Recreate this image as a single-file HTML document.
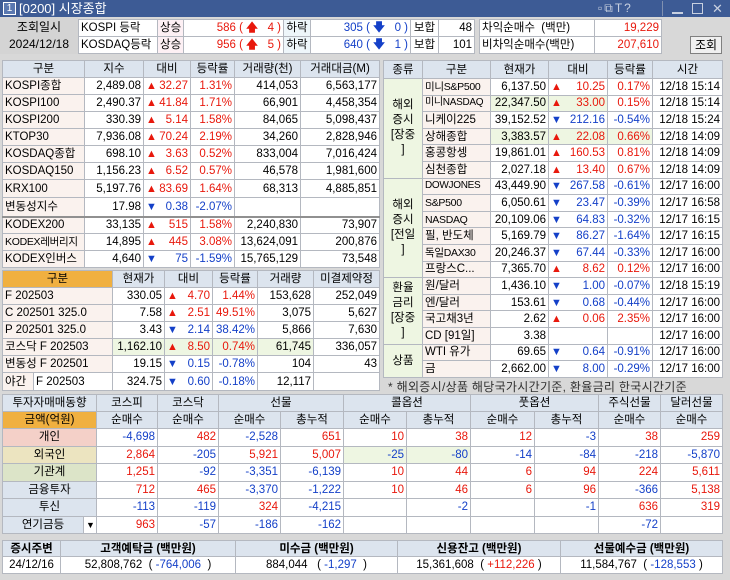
<!DOCTYPE html>
<html><head><meta charset="utf-8"><style>
*{box-sizing:border-box;margin:0;padding:0}
body{width:730px;height:580px;background:#d8d8d8;font-family:"Liberation Sans","Noto Sans CJK KR",sans-serif;font-size:11.5px;color:#000;position:relative;overflow:hidden}
.a{position:absolute}
table{border-collapse:collapse;table-layout:fixed;position:absolute;background:#fff}
td{border:1px solid #b4b8c0;padding:0 2px;white-space:nowrap;overflow:hidden;text-align:right;line-height:14px}
.h td,td.h{background:#dce4ee;text-align:center}
.l{text-align:left}.c{text-align:center}
.r{color:#e8180c}.b{color:#1440c8}
.lp{background:#faf2ee;text-align:left}
.n{font-size:10.5px;letter-spacing:-0.3px}
.g{background:#eef6e2}
.up{color:#e8180c;float:left;font-size:11px}
.dn{color:#1440c8;float:left;font-size:11px}
</style></head><body>
<div class="a" style="left:0;top:0;width:730px;height:17px;background:#3d5b95;color:#fff;font-size:13px;line-height:17px;white-space:nowrap">
<span style="display:inline-block;width:13px;height:13px;border:1px solid #fff;margin:2px 3px 0 3px;font-size:10px;line-height:11px;text-align:center;vertical-align:top;background:#5a78b0">1</span>[0200] 시장종합</div>
<div class="a" style="left:692px;top:3px;width:11px;height:11px;border:1px solid #c8d0e0"></div>
<div class="a" style="left:712px;top:3px;color:#c8d0e0;font-size:13px;line-height:11px">✕</div>
<div class="a" style="left:672px;top:12px;width:11px;height:2px;background:#c8d0e0"></div>
<div class="a" style="left:662px;top:1px;width:1px;height:15px;background:#8090b0"></div>
<div class="a" style="left:598px;top:0;color:#c8d0e0;font-size:12px;line-height:17px;letter-spacing:2px;white-space:nowrap">▫⧉T?</div>
<div class="a" style="left:0;top:17px;width:78px;height:37px;background:#d4d4d4;text-align:center;line-height:17px;font-size:12px;padding-top:2px">조회일시<br>2024/12/18</div>
<table style="left:78px;top:19px;width:396px">
<colgroup><col width="79"><col width="26"><col width="100"><col width="27"><col width="100"><col width="28"><col width="36"></colgroup>
<tr style="height:17px"><td class="l">KOSPI 등락</td><td class="c" style="background:#fdf0f4">상승</td><td class="r">586 ( <b>🡅</b> &nbsp;&nbsp;4 )</td><td class="c" style="background:#eef6fa">하락</td><td class="b">305 ( <b>🡇</b> &nbsp;&nbsp;0 )</td><td class="c">보합</td><td>48</td></tr>
<tr style="height:17px"><td class="l">KOSDAQ등락</td><td class="c" style="background:#fdf0f4">상승</td><td class="r">956 ( <b>🡅</b> &nbsp;&nbsp;5 )</td><td class="c" style="background:#eef6fa">하락</td><td class="b">640 ( <b>🡇</b> &nbsp;&nbsp;1 )</td><td class="c">보합</td><td>101</td></tr>
</table>
<table style="left:479px;top:19px;width:182px">
<colgroup><col width="115"><col width="67"></colgroup>
<tr style="height:17px"><td class="l">차익순매수 &nbsp;(백만)</td><td class="r">19,229</td></tr>
<tr style="height:17px"><td class="l">비차익순매수(백만)</td><td class="r">207,610</td></tr>
</table>
<div class="a" style="left:690px;top:36px;width:32px;height:18px;background:#f0f0f0;border:1px solid #808080;text-align:center;line-height:16px;font-size:12px">조회</div>

<table style="left:2px;top:60px;width:377px">
<colgroup><col width="82"><col width="59"><col width="47"><col width="44"><col width="66"><col width="79"></colgroup>
<tr class="h" style="height:17px"><td>구분</td><td>지수</td><td>대비</td><td>등락률</td><td>거래량(천)</td><td>거래대금(M)</td></tr>
<tr style="height:17px"><td class="lp">KOSPI종합</td><td>2,489.08</td><td class="r"><span class="up">▲</span>32.27</td><td class="r">1.31%</td><td>414,053</td><td>6,563,177</td></tr>
<tr style="height:17px"><td class="lp">KOSPI100</td><td>2,490.37</td><td class="r"><span class="up">▲</span>41.84</td><td class="r">1.71%</td><td>66,901</td><td>4,458,354</td></tr>
<tr style="height:17px"><td class="lp">KOSPI200</td><td>330.39</td><td class="r"><span class="up">▲</span>5.14</td><td class="r">1.58%</td><td>84,065</td><td>5,098,437</td></tr>
<tr style="height:17px"><td class="lp">KTOP30</td><td>7,936.08</td><td class="r"><span class="up">▲</span>70.24</td><td class="r">2.19%</td><td>34,260</td><td>2,828,946</td></tr>
<tr style="height:17px"><td class="lp">KOSDAQ종합</td><td>698.10</td><td class="r"><span class="up">▲</span>3.63</td><td class="r">0.52%</td><td>833,004</td><td>7,016,424</td></tr>
<tr style="height:17px"><td class="lp">KOSDAQ150</td><td>1,156.23</td><td class="r"><span class="up">▲</span>6.52</td><td class="r">0.57%</td><td>46,578</td><td>1,981,600</td></tr>
<tr style="height:18px"><td class="lp">KRX100</td><td>5,197.76</td><td class="r"><span class="up">▲</span>83.69</td><td class="r">1.64%</td><td>68,313</td><td>4,885,851</td></tr>
<tr style="height:19px;border-bottom:2px solid #909090"><td class="lp">변동성지수</td><td>17.98</td><td class="b"><span class="dn">▼</span>0.38</td><td class="b">-2.07%</td><td></td><td></td></tr>
<tr style="height:17px"><td class="lp">KODEX200</td><td>33,135</td><td class="r"><span class="up">▲</span>515</td><td class="r">1.58%</td><td>2,240,830</td><td>73,907</td></tr>
<tr style="height:17px"><td class="lp n">KODEX레버리지</td><td>14,895</td><td class="r"><span class="up">▲</span>445</td><td class="r">3.08%</td><td>13,624,091</td><td>200,876</td></tr>
<tr style="height:17px"><td class="lp">KODEX인버스</td><td>4,640</td><td class="b"><span class="dn">▼</span>75</td><td class="b">-1.59%</td><td>15,765,129</td><td>73,548</td></tr>
</table>

<table style="left:2px;top:270px;width:377px">
<colgroup><col width="31"><col width="79"><col width="52"><col width="48"><col width="45"><col width="56"><col width="66"></colgroup>
<tr class="h" style="height:17px"><td colspan="2" style="background:#f0b040">구분</td><td>현재가</td><td>대비</td><td>등락률</td><td>거래량</td><td>미결제약정</td></tr>
<tr style="height:17px"><td colspan="2" class="lp">F 202503</td><td>330.05</td><td class="r"><span class="up">▲</span>4.70</td><td class="r">1.44%</td><td>153,628</td><td>252,049</td></tr>
<tr style="height:17px"><td colspan="2" class="lp">C 202501 325.0</td><td>7.58</td><td class="r"><span class="up">▲</span>2.51</td><td class="r">49.51%</td><td>3,075</td><td>5,627</td></tr>
<tr style="height:17px"><td colspan="2" class="lp">P 202501 325.0</td><td>3.43</td><td class="b"><span class="dn">▼</span>2.14</td><td class="b">38.42%</td><td>5,866</td><td>7,630</td></tr>
<tr style="height:17px"><td colspan="2" class="lp">코스닥 F 202503</td><td class="g">1,162.10</td><td class="r g"><span class="up">▲</span>8.50</td><td class="r g">0.74%</td><td class="g">61,745</td><td>336,057</td></tr>
<tr style="height:17px"><td colspan="2" class="lp">변동성 F 202501</td><td>19.15</td><td class="b"><span class="dn">▼</span>0.15</td><td class="b">-0.78%</td><td>104</td><td>43</td></tr>
<tr style="height:18px"><td class="lp">야간</td><td class="l">F 202503</td><td>324.75</td><td class="b"><span class="dn">▼</span>0.60</td><td class="b">-0.18%</td><td>12,117</td><td></td></tr>
</table>

<table style="left:383px;top:60px;width:339px">
<colgroup><col width="39"><col width="68"><col width="58"><col width="59"><col width="45"><col width="70"></colgroup>
<tr class="h" style="height:18px"><td>종류</td><td>구분</td><td>현재가</td><td>대비</td><td>등락률</td><td>시간</td></tr>
<tr style="height:16.6px"><td rowspan="6" class="c g" style="white-space:normal;line-height:15px">해외<br>증시<br>[장중<br>]</td><td class="lp n">미니S&amp;P500</td><td>6,137.50</td><td class="r"><span class="up">▲</span>10.25</td><td class="r">0.17%</td><td>12/18 15:14</td></tr>
<tr style="height:16.6px"><td class="lp n" style="font-size:10px">미니NASDAQ</td><td class="g">22,347.50</td><td class="r g"><span class="up">▲</span>33.00</td><td class="r">0.15%</td><td>12/18 15:14</td></tr>
<tr style="height:16.6px"><td class="lp">니케이225</td><td>39,152.52</td><td class="b"><span class="dn">▼</span>212.16</td><td class="b">-0.54%</td><td>12/18 15:24</td></tr>
<tr style="height:16.6px"><td class="lp">상해종합</td><td class="g">3,383.57</td><td class="r g"><span class="up">▲</span>22.08</td><td class="r g">0.66%</td><td>12/18 14:09</td></tr>
<tr style="height:16.6px"><td class="lp">홍콩항셍</td><td>19,861.01</td><td class="r"><span class="up">▲</span>160.53</td><td class="r">0.81%</td><td>12/18 14:09</td></tr>
<tr style="height:16.6px"><td class="lp">심천종합</td><td>2,027.18</td><td class="r"><span class="up">▲</span>13.40</td><td class="r">0.67%</td><td>12/18 14:09</td></tr>
<tr style="height:16.6px"><td rowspan="6" class="c g" style="line-height:15px">해외<br>증시<br>[전일<br>]</td><td class="lp n" style="font-size:10px">DOWJONES</td><td>43,449.90</td><td class="b"><span class="dn">▼</span>267.58</td><td class="b">-0.61%</td><td>12/17 16:00</td></tr>
<tr style="height:16.6px"><td class="lp n">S&amp;P500</td><td>6,050.61</td><td class="b"><span class="dn">▼</span>23.47</td><td class="b">-0.39%</td><td>12/17 16:58</td></tr>
<tr style="height:16.6px"><td class="lp n">NASDAQ</td><td>20,109.06</td><td class="b"><span class="dn">▼</span>64.83</td><td class="b">-0.32%</td><td>12/17 16:15</td></tr>
<tr style="height:16.6px"><td class="lp">필, 반도체</td><td>5,169.79</td><td class="b"><span class="dn">▼</span>86.27</td><td class="b">-1.64%</td><td>12/17 16:15</td></tr>
<tr style="height:16.6px"><td class="lp n">독일DAX30</td><td>20,246.37</td><td class="b"><span class="dn">▼</span>67.44</td><td class="b">-0.33%</td><td>12/17 16:00</td></tr>
<tr style="height:16.6px"><td class="lp">프랑스C...</td><td>7,365.70</td><td class="r"><span class="up">▲</span>8.62</td><td class="r">0.12%</td><td>12/17 16:00</td></tr>
<tr style="height:16.6px"><td rowspan="4" class="c g" style="line-height:15px">환율<br>금리<br>[장중<br>]</td><td class="lp">원/달러</td><td>1,436.10</td><td class="b"><span class="dn">▼</span>1.00</td><td class="b">-0.07%</td><td>12/18 15:19</td></tr>
<tr style="height:16.6px"><td class="lp">엔/달러</td><td>153.61</td><td class="b"><span class="dn">▼</span>0.68</td><td class="b">-0.44%</td><td>12/17 16:00</td></tr>
<tr style="height:16.6px"><td class="lp">국고채3년</td><td>2.62</td><td class="r"><span class="up">▲</span>0.06</td><td class="r">2.35%</td><td>12/17 16:00</td></tr>
<tr style="height:16.6px"><td class="lp">CD [91일]</td><td>3.38</td><td></td><td></td><td>12/17 16:00</td></tr>
<tr style="height:16.6px"><td rowspan="2" class="c g">상품</td><td class="lp">WTI 유가</td><td>69.65</td><td class="b"><span class="dn">▼</span>0.64</td><td class="b">-0.91%</td><td>12/17 16:00</td></tr>
<tr style="height:16.6px"><td class="lp">금</td><td>2,662.00</td><td class="b"><span class="dn">▼</span>8.00</td><td class="b">-0.29%</td><td>12/17 16:00</td></tr>
</table>
<div class="a" style="left:388px;top:378px;font-size:12px;color:#303030;letter-spacing:0.3px">* 해외증시/상품 해당국가시간기준, 환율금리 한국시간기준</div>

<table style="left:2px;top:394px;width:720px">
<colgroup><col width="81"><col width="13"><col width="61"><col width="61"><col width="62"><col width="63"><col width="63"><col width="64"><col width="64"><col width="64"><col width="62"><col width="62"></colgroup>
<tr class="h" style="height:17px"><td colspan="2">투자자매매동향</td><td>코스피</td><td>코스닥</td><td colspan="2">선물</td><td colspan="2">콜옵션</td><td colspan="2">풋옵션</td><td>주식선물</td><td>달러선물</td></tr>
<tr class="h" style="height:17px"><td colspan="2" style="background:#f0b040">금액(억원)</td><td>순매수</td><td>순매수</td><td>순매수</td><td>총누적</td><td>순매수</td><td>총누적</td><td>순매수</td><td>총누적</td><td>순매수</td><td>순매수</td></tr>
<tr style="height:17.5px"><td colspan="2" class="c" style="background:#f4d0c8">개인</td><td class="b">-4,698</td><td class="r">482</td><td class="b">-2,528</td><td class="r">651</td><td class="r">10</td><td class="r">38</td><td class="r">12</td><td class="b">-3</td><td class="r">38</td><td class="r">259</td></tr>
<tr style="height:17.5px"><td colspan="2" class="c" style="background:#ece4c0">외국인</td><td class="r">2,864</td><td class="b">-205</td><td class="r">5,921</td><td class="r">5,007</td><td class="b g">-25</td><td class="b g">-80</td><td class="b">-14</td><td class="b">-84</td><td class="b">-218</td><td class="b">-5,870</td></tr>
<tr style="height:17.5px"><td colspan="2" class="c" style="background:#dce4c8">기관계</td><td class="r">1,251</td><td class="b">-92</td><td class="b">-3,351</td><td class="b">-6,139</td><td class="r">10</td><td class="r">44</td><td class="r">6</td><td class="r">94</td><td class="r">224</td><td class="r">5,611</td></tr>
<tr style="height:17.5px"><td colspan="2" class="c" style="background:#dce4ee">금융투자</td><td class="r">712</td><td class="r">465</td><td class="b">-3,370</td><td class="b">-1,222</td><td class="r">10</td><td class="r">46</td><td class="r">6</td><td class="r">96</td><td class="b">-366</td><td class="r">5,138</td></tr>
<tr style="height:17.5px"><td colspan="2" class="c" style="background:#dce4ee">투신</td><td class="b">-113</td><td class="b">-119</td><td class="r">324</td><td class="b">-4,215</td><td></td><td class="b">-2</td><td></td><td class="b">-1</td><td class="r">636</td><td class="r">319</td></tr>
<tr style="height:17.5px"><td class="c" style="background:#dce4ee">연기금등</td><td class="c" style="background:#fff;font-size:9px">▼</td><td class="r">963</td><td class="b">-57</td><td class="b">-186</td><td class="b">-162</td><td></td><td></td><td></td><td></td><td class="b">-72</td><td></td></tr>
</table>

<table style="left:2px;top:540px;width:720px">
<colgroup><col width="58"><col width="175"><col width="162"><col width="163"><col width="162"></colgroup>
<tr class="h" style="height:16px;font-weight:bold"><td>증시주변</td><td>고객예탁금 (백만원)</td><td>미수금 (백만원)</td><td>신용잔고 (백만원)</td><td>선물예수금 (백만원)</td></tr>
<tr style="height:17px"><td class="c">24/12/16</td><td class="c">52,808,762 &nbsp;( <span class="b">-764,006</span> &nbsp;)</td><td class="c">884,044 &nbsp;&nbsp;( <span class="b">-1,297</span> &nbsp;)</td><td class="c">15,361,608 &nbsp;( <span class="r">+112,226</span> )</td><td class="c">11,584,767 &nbsp;( <span class="b">-128,553</span> )</td></tr>
</table>
</body></html>
